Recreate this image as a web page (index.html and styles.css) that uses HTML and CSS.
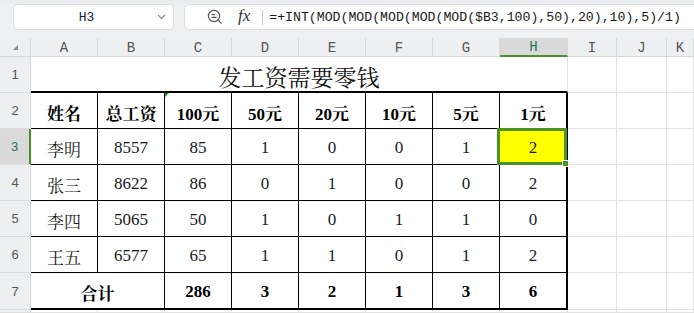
FILE: index.html
```html
<!DOCTYPE html>
<html lang="zh-CN">

<head>
    <meta charset="UTF-8">
    <title>发工资需要零钱</title>
    <link rel="stylesheet" href="styles.css">
</head>

<body>
    <div class="toolbar">
        <div class="namebox">
            <span class="cellref">H3</span>
            <svg class="chevron" width="9" height="6" viewBox="0 0 9 6">
                <path d="M1 1 L4.5 4.5 L8 1" fill="none" stroke="#8a8a8a" stroke-width="1.1" />
            </svg>
        </div>
        <div class="formula">
            <svg class="lookup" width="17" height="17" viewBox="0 0 17 17">
                <circle cx="7" cy="7" r="5.6" fill="none" stroke="#555" stroke-width="1.2" />
                <path d="M4.6 5.6 H8.2 M4.6 8.4 H9.6" stroke="#555" stroke-width="1.1" />
                <path d="M11.1 11.1 L14.6 14.6" stroke="#555" stroke-width="1.3" />
            </svg>
            <span class="fx">fx</span>
            <span class="sep"></span>
            <span class="expr">=+INT(MOD(MOD(MOD(MOD(MOD($B3,100),50),20),10),5)/1)</span>
        </div>
    </div>

    <div class="sheet">
        <!-- column headers -->
        <div class="cell hd corner"><span class="tri"></span></div>
        <div class="cell hd">A</div>
        <div class="cell hd">B</div>
        <div class="cell hd">C</div>
        <div class="cell hd">D</div>
        <div class="cell hd">E</div>
        <div class="cell hd">F</div>
        <div class="cell hd">G</div>
        <div class="cell hd active-col">H</div>
        <div class="cell hd">I</div>
        <div class="cell hd">J</div>
        <div class="cell hd">K</div>

        <!-- row 1 -->
        <div class="cell rh">1</div>
        <div class="cell title">发工资需要零钱</div>
        <div class="cell"></div>
        <div class="cell"></div>
        <div class="cell"></div>

        <!-- row 2 -->
        <div class="cell rh">2</div>
        <div class="cell t b">姓名</div>
        <div class="cell t b">总工资</div>
        <div class="cell t b flag">100元</div>
        <div class="cell t b">50元</div>
        <div class="cell t b">20元</div>
        <div class="cell t b">10元</div>
        <div class="cell t b">5元</div>
        <div class="cell t b edge">1元</div>
        <div class="cell"></div>
        <div class="cell"></div>
        <div class="cell"></div>

        <!-- row 3 -->
        <div class="cell rh active-row">3</div>
        <div class="cell t">李明</div>
        <div class="cell t">8557</div>
        <div class="cell t">85</div>
        <div class="cell t">1</div>
        <div class="cell t">0</div>
        <div class="cell t">0</div>
        <div class="cell t">1</div>
        <div class="cell t edge selected">2</div>
        <div class="cell"></div>
        <div class="cell"></div>
        <div class="cell"></div>

        <!-- row 4 -->
        <div class="cell rh">4</div>
        <div class="cell t">张三</div>
        <div class="cell t">8622</div>
        <div class="cell t">86</div>
        <div class="cell t">0</div>
        <div class="cell t">1</div>
        <div class="cell t">0</div>
        <div class="cell t">0</div>
        <div class="cell t edge">2</div>
        <div class="cell"></div>
        <div class="cell"></div>
        <div class="cell"></div>

        <!-- row 5 -->
        <div class="cell rh">5</div>
        <div class="cell t">李四</div>
        <div class="cell t">5065</div>
        <div class="cell t">50</div>
        <div class="cell t">1</div>
        <div class="cell t">0</div>
        <div class="cell t">1</div>
        <div class="cell t">1</div>
        <div class="cell t edge">0</div>
        <div class="cell"></div>
        <div class="cell"></div>
        <div class="cell"></div>

        <!-- row 6 -->
        <div class="cell rh">6</div>
        <div class="cell t">王五</div>
        <div class="cell t">6577</div>
        <div class="cell t">65</div>
        <div class="cell t">1</div>
        <div class="cell t">1</div>
        <div class="cell t">0</div>
        <div class="cell t">1</div>
        <div class="cell t edge">2</div>
        <div class="cell"></div>
        <div class="cell"></div>
        <div class="cell"></div>

        <!-- row 7 -->
        <div class="cell rh">7</div>
        <div class="cell t b bottom total">合计</div>
        <div class="cell t b bottom">286</div>
        <div class="cell t b bottom">3</div>
        <div class="cell t b bottom">2</div>
        <div class="cell t b bottom">1</div>
        <div class="cell t b bottom">3</div>
        <div class="cell t b bottom edge">6</div>
        <div class="cell"></div>
        <div class="cell"></div>
        <div class="cell"></div>

        <!-- row 8 -->
        <div class="cell rh"></div>
        <div class="cell"></div>
        <div class="cell"></div>
        <div class="cell"></div>
        <div class="cell"></div>
        <div class="cell"></div>
        <div class="cell"></div>
        <div class="cell"></div>
        <div class="cell"></div>
        <div class="cell"></div>
        <div class="cell"></div>
        <div class="cell"></div>
    </div>
</body>

</html>
```

FILE: styles.css
```css
* {
    padding: 0;
    margin: 0;
    box-sizing: border-box;
}

body {
    width: 694px;
    height: 313px;
    overflow: hidden;
    background: #eef0f2;
    font-family: "Liberation Serif", "Noto Serif CJK SC", "Noto Sans CJK SC", serif;
}

/* name box + formula bar */
.toolbar {
    height: 38px;
    display: flex;
    padding: 4px 0 0 13px;
    gap: 10px;
    overflow: hidden;
    background: linear-gradient(#e9ebee, #eef0f2 6px);
}

.namebox {
    width: 161px;
    height: 26px;
    background: #fff;
    border: 1px solid #dcdde0;
    border-radius: 5px;
    display: flex;
    align-items: center;
}

.cellref {
    flex: 1;
    text-align: center;
    font-family: "Liberation Mono", monospace;
    font-size: 13px;
    color: #222;
    padding-left: 2px;
}

.chevron {
    margin-right: 7px;
}

.formula {
    flex: 1;
    height: 26px;
    margin-right: -12px;
    background: #fff;
    border: 1px solid #dcdde0;
    border-radius: 5px;
    display: flex;
    align-items: center;
    padding-left: 22px;
}

.lookup {
    margin-top: 1px;
}

.fx {
    font-family: "Liberation Serif", serif;
    font-style: italic;
    font-size: 17px;
    color: #333;
    margin-left: 14px;
    margin-bottom: 2px;
}

.sep {
    width: 1px;
    height: 15px;
    background: #c8c8c8;
    margin: 0 6px 0 12px;
}

.expr {
    font-family: "Liberation Mono", monospace;
    font-size: 13.2px;
    color: #1a1a1a;
    white-space: nowrap;
}

/* the grid */
.sheet {
    height: 275px;
    display: grid;
    grid-template-columns: 31px repeat(7, 67px) 68px 49px 50px 1fr;
    grid-template-rows: 19px 36px 36px 36px 36px 36px 36px 37px 1fr;
    background: #fff;
}

.cell {
    border-right: 1px solid #e1e1e1;
    border-bottom: 1px solid #e1e1e1;
    display: flex;
    align-items: center;
    justify-content: center;
    white-space: nowrap;
}

.hd {
    background: #eeeff1;
    border-right-color: #dadada;
    border-bottom-color: #d6d6d6;
    font-family: "Liberation Mono", monospace;
    font-size: 14px;
    color: #555;
    padding-top: 1px;
}

.corner {
    border-right-color: #d6d6d6;
}

.tri {
    width: 0;
    height: 0;
    border-left: 5px solid transparent;
    border-bottom: 5px solid #8a8a8a;
}

.active-col {
    background: #d9d9d9;
    color: #1d7560;
    border-bottom: 2px solid #4a9223;
}

.rh {
    background: #eeeff1;
    border-right-color: #d6d6d6;
    border-bottom-color: #dcdcdc;
    font-family: "Liberation Sans", sans-serif;
    font-size: 13px;
    color: #555;
}

.active-row {
    background: #dadada;
    color: #1d7560;
    border-right: 2px solid #4a9223;
}

.title {
    grid-column: span 8;
    border-bottom: 2px solid #000;
    font-size: 23px;
    color: #111;
    padding-top: 4px;
}

/* table body */
.t {
    border-right-color: #000;
    border-bottom-color: #000;
    font-size: 17px;
    color: #1a1a1a;
    padding-top: 3px;
}

.b {
    font-weight: bold;
    color: #000;
}

.edge {
    border-right-width: 2px;
}

.bottom {
    border-bottom-width: 2px;
}

.total {
    grid-column: span 2;
}

.flag {
    position: relative;
}

.flag::before {
    content: "";
    position: absolute;
    top: 0;
    left: 0;
    border-top: 4px solid #2f8f2f;
    border-right: 4px solid transparent;
}

/* current cell */
.selected {
    position: relative;
    background: #ffff00;
}

.selected::after {
    content: "";
    position: absolute;
    top: -1px;
    left: -3px;
    right: -1px;
    bottom: -1px;
    border: 3px solid #4a9223;
}

.selected::before {
    content: "";
    position: absolute;
    right: -3px;
    bottom: -3px;
    width: 5px;
    height: 5px;
    background: #4a9223;
    border: 1px solid #fff;
    z-index: 1;
}
```
